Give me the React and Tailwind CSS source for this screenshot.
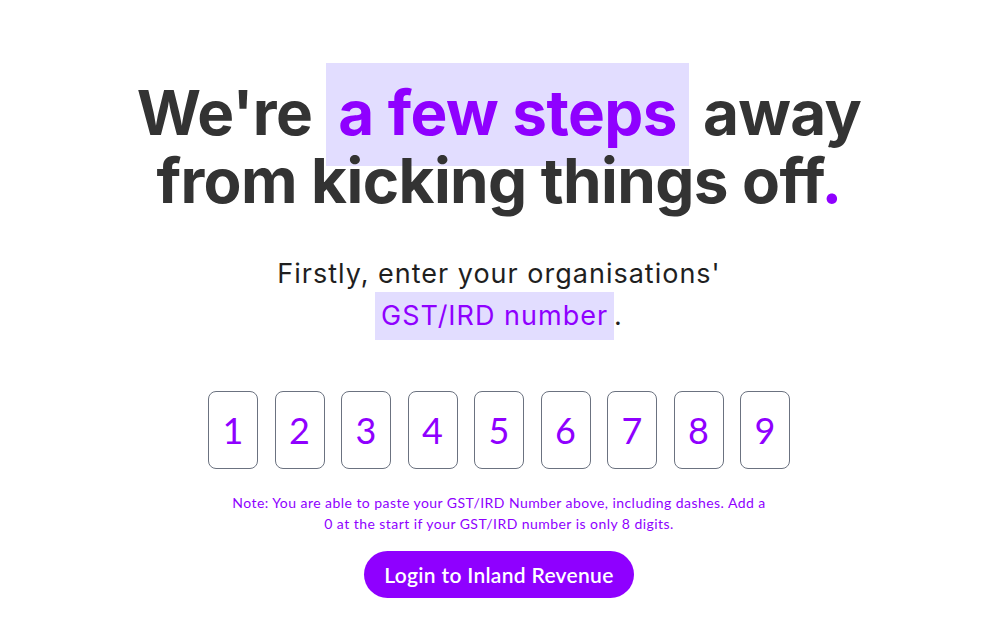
import { useState } from "react";

const DIGITS = ["1", "2", "3", "4", "5", "6", "7", "8", "9"];

export default function App() {
  const [digits, setDigits] = useState(DIGITS);

  return (
    <div className="min-h-[621px] w-full bg-white flex flex-col items-center">
      <h1 className="mt-[79px] text-center text-[62px] leading-[68px] font-bold text-[#333333] tracking-[-0.6px] font-['Inter',sans-serif]">
        We're{" "}
        <span className="bg-[#e2ddff] text-[#8f00ff] px-[12px] pt-[12px] pb-[16px]">a few steps</span>{" "}
        away
        <br />
        from kicking things off<span className="text-[#8f00ff]">.</span>
      </h1>

      <p className="mt-[38px] text-center text-[27px] leading-[42px] tracking-[1px] text-[#1f1f1f] font-['Inter',sans-serif]">
        Firstly, enter your organisations'
        <br />
        <span className="bg-[#e2ddff] text-[#8f00ff] px-[6px] pt-[7px] pb-[8px]">GST/IRD number</span>.
      </p>

      <div className="mt-[54px] flex gap-[16.5px]">
        {digits.map((d, i) => (
          <input
            key={i}
            value={d}
            maxLength={1}
            onChange={(e) => {
              const next = [...digits];
              next[i] = e.target.value;
              setDigits(next);
            }}
            className="w-[50px] h-[78px] rounded-[8px] border border-[#6b7280] text-center text-[36px] text-[#8f00ff] font-['Lato',sans-serif] outline-none"
          />
        ))}
      </div>

      <p className="mt-[23px] max-w-[538px] text-center text-[14px] leading-[21px] tracking-[0.45px] text-[#8f00ff] font-['Lato',sans-serif]">
        Note: You are able to paste your GST/IRD Number above, including dashes. Add a 0 at the start if your GST/IRD number is only 8 digits.
      </p>

      <button
        type="button"
        className="mt-[17px] h-[47px] px-[20px] rounded-full bg-[#8f00ff] text-white text-[21px] tracking-[0.3px] font-semibold font-['Lato',sans-serif]"
      >
        Login to Inland Revenue
      </button>
    </div>
  );
}
